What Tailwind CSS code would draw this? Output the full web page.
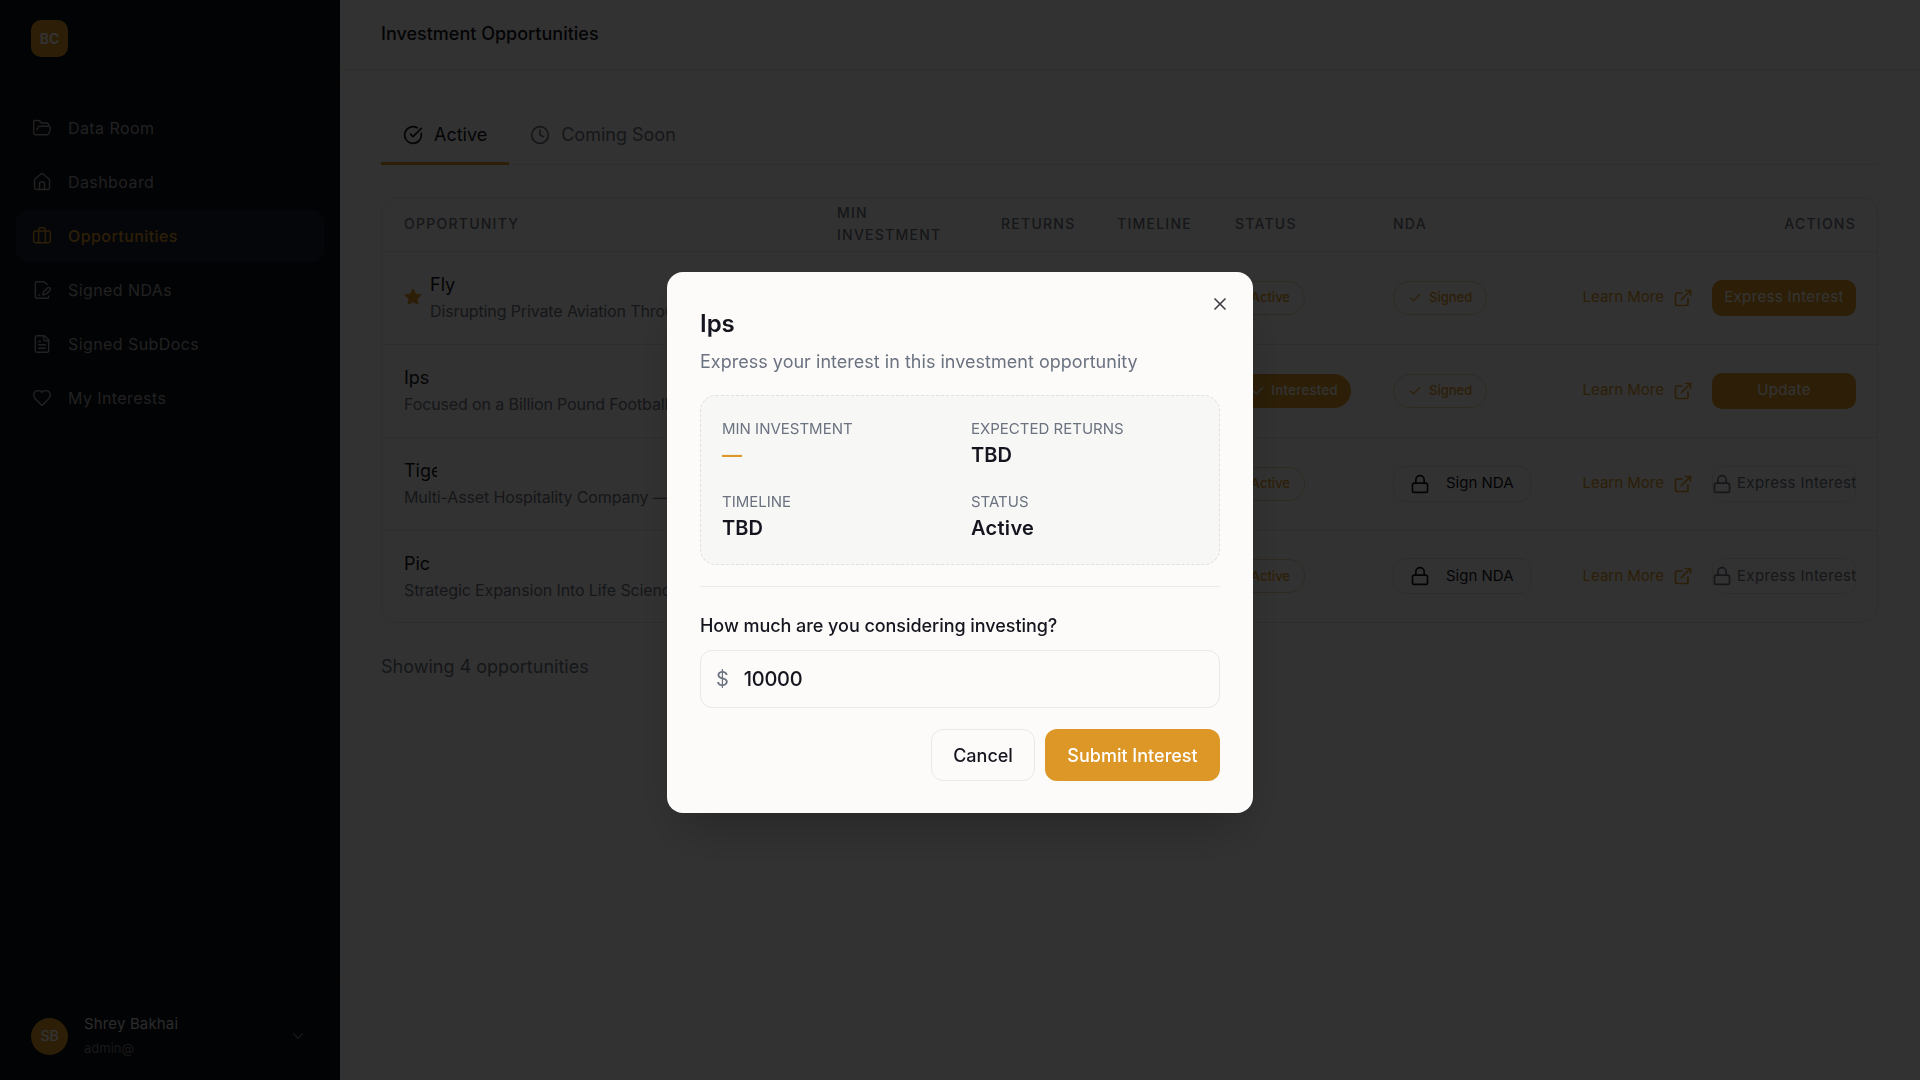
<!DOCTYPE html>
<html lang="en">
<head>
  <meta charset="UTF-8">
  <title>Investment Opportunities</title>
  <script src="https://cdn.jsdelivr.net/npm/@tailwindcss/browser@4"></script>
</head>
<body class="h-[1080px] overflow-hidden bg-[#fbfaf8] font-['Inter',sans-serif] text-[#15151f]">
  <div class="flex h-[1080px]">

    <!-- Sidebar -->
    <aside class="w-[340px] shrink-0 flex flex-col bg-[#0d0f14] text-[#a3a3a8]">
      <div class="h-[81px] shrink-0 flex items-center px-[31px] pb-[3px] border-b border-white/5">
        <div class="w-[37px] h-[37px] rounded-[10px] bg-[#dc9727] text-white text-sm font-semibold flex items-center justify-center">BC</div>
      </div>
      <nav class="flex flex-col gap-[2px] px-4 pt-[21px] text-[16px] tracking-[0.42px]">
        <a class="h-[52px] flex items-center gap-[16px] px-4 rounded-xl">
          <svg class="w-5 h-5" viewBox="0 0 24 24" fill="none" stroke="currentColor" stroke-width="1.75" stroke-linecap="round" stroke-linejoin="round"><path d="m6 14 1.5-2.9A2 2 0 0 1 9.24 10H20a2 2 0 0 1 1.94 2.5l-1.54 6a2 2 0 0 1-1.95 1.5H4a2 2 0 0 1-2-2V5a2 2 0 0 1 2-2h3.9a2 2 0 0 1 1.69.9l.81 1.2a2 2 0 0 0 1.67.9H18a2 2 0 0 1 2 2v2"/></svg>
          Data Room
        </a>
        <a class="h-[52px] flex items-center gap-[16px] px-4 rounded-xl">
          <svg class="w-5 h-5" viewBox="0 0 24 24" fill="none" stroke="currentColor" stroke-width="1.75" stroke-linecap="round" stroke-linejoin="round"><path d="M15 21v-8a1 1 0 0 0-1-1h-4a1 1 0 0 0-1 1v8"/><path d="M3 10a2 2 0 0 1 .709-1.528l7-5.999a2 2 0 0 1 2.582 0l7 5.999A2 2 0 0 1 21 10v9a2 2 0 0 1-2 2H5a2 2 0 0 1-2-2z"/></svg>
          Dashboard
        </a>
        <a class="h-[52px] flex items-center gap-[16px] px-4 rounded-xl bg-[#1c2230] text-[#dc9727] font-medium">
          <svg class="w-5 h-5" viewBox="0 0 24 24" fill="none" stroke="currentColor" stroke-width="1.75" stroke-linecap="round" stroke-linejoin="round"><path d="M16 20V4a2 2 0 0 0-2-2h-4a2 2 0 0 0-2 2v16"/><rect width="20" height="14" x="2" y="6" rx="2"/></svg>
          Opportunities
        </a>
        <a class="h-[52px] flex items-center gap-[16px] px-4 rounded-xl">
          <svg class="w-5 h-5" viewBox="0 0 24 24" fill="none" stroke="currentColor" stroke-width="1.75" stroke-linecap="round" stroke-linejoin="round"><path d="M20 19.5v.5a2 2 0 0 1-2 2H6a2 2 0 0 1-2-2V4a2 2 0 0 1 2-2h8.5L18 5.5"/><path d="M8 18h1"/><path d="M18.42 9.61a2.1 2.1 0 1 1 2.97 2.97L16.95 17 13 18l.99-3.95 4.43-4.44Z"/></svg>
          Signed NDAs
        </a>
        <a class="h-[52px] flex items-center gap-[16px] px-4 rounded-xl">
          <svg class="w-5 h-5" viewBox="0 0 24 24" fill="none" stroke="currentColor" stroke-width="1.75" stroke-linecap="round" stroke-linejoin="round"><path d="M15 2H6a2 2 0 0 0-2 2v16a2 2 0 0 0 2 2h12a2 2 0 0 0 2-2V7Z"/><path d="M14 2v4a2 2 0 0 0 2 2h4"/><path d="M10 9H8"/><path d="M16 13H8"/><path d="M16 17H8"/></svg>
          Signed SubDocs
        </a>
        <a class="h-[52px] flex items-center gap-[16px] px-4 rounded-xl">
          <svg class="w-5 h-5" viewBox="0 0 24 24" fill="none" stroke="currentColor" stroke-width="1.75" stroke-linecap="round" stroke-linejoin="round"><path d="M19 14c1.49-1.46 3-3.21 3-5.5A5.5 5.5 0 0 0 16.5 3c-1.76 0-3 .5-4.5 2-1.5-1.5-2.74-2-4.5-2A5.5 5.5 0 0 0 2 8.5c0 2.3 1.5 4.05 3 5.5l7 7Z"/></svg>
          My Interests
        </a>
      </nav>
      <div class="mt-auto h-[97px] pt-[8px] border-t border-white/5 flex items-center pl-[31px] pr-[33px] gap-4">
        <div class="w-[37px] h-[37px] rounded-full bg-[#dc9727] text-white text-sm font-medium flex items-center justify-center">SB</div>
        <div class="flex-1">
          <div class="text-[15px] leading-5 text-[#d6d6d8] tracking-[0.15px]">Shrey Bakhai</div>
          <div class="text-[13px] leading-5 mt-[4px] text-[#77777d]">admin@</div>
        </div>
        <svg class="w-[18px] h-[18px] text-[#77777d]" viewBox="0 0 24 24" fill="none" stroke="currentColor" stroke-width="1.75" stroke-linecap="round" stroke-linejoin="round"><path d="m6 9 6 6 6-6"/></svg>
      </div>
    </aside>

    <!-- Main -->
    <main class="flex-1 min-w-0">
      <header class="h-[70px] pb-[2px] border-b border-[#e3e3e1] flex items-center px-[41px]">
        <h1 class="text-[18px] font-medium">Investment Opportunities</h1>
      </header>

      <div class="pl-[41px] pr-[42px] pt-[35px]">
        <!-- Tabs -->
        <div class="flex h-[60px] border-b border-[#e3e3e1] text-[18px]">
          <div class="flex items-center gap-[11px] px-[22px] pt-[2px] border-b-[3px] border-[#dc9727] h-[60px]">
            <svg class="w-5 h-5" viewBox="0 0 24 24" fill="none" stroke="currentColor" stroke-width="2" stroke-linecap="round" stroke-linejoin="round"><path d="M21.801 10A10 10 0 1 1 17 3.335"/><path d="m9 11 3 3L22 4"/></svg>
            Active
          </div>
          <div class="flex items-center gap-[11px] px-[21px] text-[#6b7280]">
            <svg class="w-5 h-5" viewBox="0 0 24 24" fill="none" stroke="currentColor" stroke-width="2" stroke-linecap="round" stroke-linejoin="round"><circle cx="12" cy="12" r="10"/><polyline points="12 6 12 12 16 14"/></svg>
            Coming Soon
          </div>
        </div>

        <!-- Table -->
        <div class="mt-8 border border-[#e3e3e1] rounded-2xl overflow-hidden">
          <table class="w-full table-fixed">
            <colgroup>
              <col class="w-[433px]"><col class="w-[165px]"><col class="w-[116px]"><col class="w-[117px]"><col class="w-[158px]"><col>
            </colgroup>
            <thead>
              <tr class="h-[53px] text-left text-[14px] uppercase tracking-[1.25px] leading-[22px] text-[#6b7280]">
                <th class="pl-[22px] font-medium">Opportunity</th>
                <th class="pl-[22px] font-medium">Min<br>Investment</th>
                <th class="pl-[21px] font-medium">Returns</th>
                <th class="pl-[21px] font-medium">Timeline</th>
                <th class="pl-[22px] font-medium">Status</th>
                <th class="font-medium pl-[22px]">
                  <div class="flex justify-between pr-[21px]"><span>NDA</span><span>Actions</span></div>
                </th>
              </tr>
            </thead>
            <tbody>
              <tr class="h-[93px] border-t border-[#e3e3e1]">
                <td class="pl-[22px] pb-[1px]" colspan="4">
                  <div class="flex items-center gap-[8px]">
                    <svg class="w-[18px] h-[18px] text-[#dc9727]" viewBox="0 0 24 24" fill="currentColor" stroke="currentColor" stroke-width="2" stroke-linejoin="round"><polygon points="12 2 15.09 8.26 22 9.27 17 14.14 18.18 21.02 12 17.77 5.82 21.02 7 14.14 2 9.27 8.91 8.26 12 2"/></svg>
                    <div>
                      <div class="text-[18px] leading-7">Fly</div>
                      <div class="text-[16px] leading-6 tracking-[-0.12px] text-[#6b7280] whitespace-nowrap">Disrupting Private Aviation Through</div>
                    </div>
                  </div>
                </td>
                <td class="pl-[22px]"><span class="inline-flex items-center justify-end w-[70px] h-[34px] pr-[14px] rounded-full border border-[#e8d5b0] text-[#dc9727] text-[13px] font-medium">Active</span></td>
                <td class="pl-[22px]">
                  <div class="flex items-center pr-[21px]">
                    <span class="inline-flex items-center gap-[7px] h-[34px] px-[14px] rounded-full border border-[#e8d5b0] text-[#dc9727] text-[13px] font-medium">
                      <svg class="w-[14px] h-[14px]" viewBox="0 0 24 24" fill="none" stroke="currentColor" stroke-width="2" stroke-linecap="round" stroke-linejoin="round"><path d="M20 6 9 17l-5-5"/></svg>
                      Signed
                    </span>
                    <a class="ml-auto flex items-center gap-[9px] text-[#dc9727] text-[15px]">Learn More
                      <svg class="w-5 h-5" viewBox="0 0 24 24" fill="none" stroke="currentColor" stroke-width="2" stroke-linecap="round" stroke-linejoin="round"><path d="M15 3h6v6"/><path d="M10 14 21 3"/><path d="M18 13v6a2 2 0 0 1-2 2H5a2 2 0 0 1-2-2V8a2 2 0 0 1 2-2h6"/></svg>
                    </a>
                    <button class="ml-[19px] w-[144px] h-[36px] rounded-[10px] bg-[#dc9727] text-white text-[15px] tracking-[0.35px]">Express Interest</button>
                  </div>
                </td>
              </tr>
              <tr class="h-[93px] border-t border-[#e3e3e1]">
                <td class="pl-[22px] pb-[1px]" colspan="4">
                  <div class="w-[28px] overflow-hidden text-[18px] leading-7">Ips</div>
                  <div class="text-[16px] leading-6 tracking-[-0.12px] text-[#6b7280] whitespace-nowrap">Focused on a Billion Pound Football Club</div>
                </td>
                <td class="pl-[22px]"><span class="inline-flex items-center justify-end gap-[6px] w-[116px] h-[34px] pr-[13px] rounded-full bg-[#dc9727] text-white text-[13px] font-medium tracking-[0.4px]">
                  <svg class="w-[14px] h-[14px]" viewBox="0 0 24 24" fill="none" stroke="currentColor" stroke-width="2" stroke-linecap="round" stroke-linejoin="round"><path d="M20 6 9 17l-5-5"/></svg>
                  Interested
                </span></td>
                <td class="pl-[22px]">
                  <div class="flex items-center pr-[21px]">
                    <span class="inline-flex items-center gap-[7px] h-[34px] px-[14px] rounded-full border border-[#e8d5b0] text-[#dc9727] text-[13px] font-medium">
                      <svg class="w-[14px] h-[14px]" viewBox="0 0 24 24" fill="none" stroke="currentColor" stroke-width="2" stroke-linecap="round" stroke-linejoin="round"><path d="M20 6 9 17l-5-5"/></svg>
                      Signed
                    </span>
                    <a class="ml-auto flex items-center gap-[9px] text-[#dc9727] text-[15px]">Learn More
                      <svg class="w-5 h-5" viewBox="0 0 24 24" fill="none" stroke="currentColor" stroke-width="2" stroke-linecap="round" stroke-linejoin="round"><path d="M15 3h6v6"/><path d="M10 14 21 3"/><path d="M18 13v6a2 2 0 0 1-2 2H5a2 2 0 0 1-2-2V8a2 2 0 0 1 2-2h6"/></svg>
                    </a>
                    <button class="ml-[19px] w-[144px] h-[36px] rounded-[10px] bg-[#dc9727] text-white text-[15px] tracking-[0.35px]">Update</button>
                  </div>
                </td>
              </tr>
              <tr class="h-[93px] border-t border-[#e3e3e1]">
                <td class="pl-[22px] pb-[1px]" colspan="4">
                  <div class="w-[33px] overflow-hidden text-[18px] leading-7">Tige</div>
                  <div class="text-[16px] leading-6 tracking-[-0.12px] text-[#6b7280] whitespace-nowrap">Multi-Asset Hospitality Company — A</div>
                </td>
                <td class="pl-[22px]"><span class="inline-flex items-center justify-end w-[70px] h-[34px] pr-[14px] rounded-full border border-[#e8d5b0] text-[#dc9727] text-[13px] font-medium">Active</span></td>
                <td class="pl-[22px]">
                  <div class="flex items-center pr-[21px]">
                    <span class="inline-flex items-center gap-4 h-[36px] pl-[16px] pr-[16px] rounded-xl border border-[#dededc] text-[15px]">
                      <svg class="w-5 h-5" viewBox="0 0 24 24" fill="none" stroke="currentColor" stroke-width="2" stroke-linecap="round" stroke-linejoin="round"><rect width="18" height="11" x="3" y="11" rx="2"/><path d="M7 11V7a5 5 0 0 1 10 0v4"/></svg>
                      Sign NDA
                    </span>
                    <a class="ml-auto flex items-center gap-[9px] text-[#dc9727] text-[15px]">Learn More
                      <svg class="w-5 h-5" viewBox="0 0 24 24" fill="none" stroke="currentColor" stroke-width="2" stroke-linecap="round" stroke-linejoin="round"><path d="M15 3h6v6"/><path d="M10 14 21 3"/><path d="M18 13v6a2 2 0 0 1-2 2H5a2 2 0 0 1-2-2V8a2 2 0 0 1 2-2h6"/></svg>
                    </a>
                    <span class="ml-[19px] w-[144px] h-[36px] rounded-[10px] border border-[#e3e3e1] flex items-center gap-[5px] text-[#6b7280] text-[15px] tracking-[0.35px] whitespace-nowrap">
                      <svg class="w-5 h-5 shrink-0 -ml-px" viewBox="0 0 24 24" fill="none" stroke="currentColor" stroke-width="2" stroke-linecap="round" stroke-linejoin="round"><rect width="18" height="11" x="3" y="11" rx="2"/><path d="M7 11V7a5 5 0 0 1 10 0v4"/></svg>
                      Express Interest
                    </span>
                  </div>
                </td>
              </tr>
              <tr class="h-[92px] border-t border-[#e3e3e1]">
                <td class="pl-[22px] pb-[1px]" colspan="4">
                  <div class="w-[28px] overflow-hidden text-[18px] leading-7">Pic</div>
                  <div class="text-[16px] leading-6 tracking-[-0.12px] text-[#6b7280] whitespace-nowrap">Strategic Expansion Into Life Sciences</div>
                </td>
                <td class="pl-[22px]"><span class="inline-flex items-center justify-end w-[70px] h-[34px] pr-[14px] rounded-full border border-[#e8d5b0] text-[#dc9727] text-[13px] font-medium">Active</span></td>
                <td class="pl-[22px]">
                  <div class="flex items-center pr-[21px]">
                    <span class="inline-flex items-center gap-4 h-[36px] pl-[16px] pr-[16px] rounded-xl border border-[#dededc] text-[15px]">
                      <svg class="w-5 h-5" viewBox="0 0 24 24" fill="none" stroke="currentColor" stroke-width="2" stroke-linecap="round" stroke-linejoin="round"><rect width="18" height="11" x="3" y="11" rx="2"/><path d="M7 11V7a5 5 0 0 1 10 0v4"/></svg>
                      Sign NDA
                    </span>
                    <a class="ml-auto flex items-center gap-[9px] text-[#dc9727] text-[15px]">Learn More
                      <svg class="w-5 h-5" viewBox="0 0 24 24" fill="none" stroke="currentColor" stroke-width="2" stroke-linecap="round" stroke-linejoin="round"><path d="M15 3h6v6"/><path d="M10 14 21 3"/><path d="M18 13v6a2 2 0 0 1-2 2H5a2 2 0 0 1-2-2V8a2 2 0 0 1 2-2h6"/></svg>
                    </a>
                    <span class="ml-[19px] w-[144px] h-[36px] rounded-[10px] border border-[#e3e3e1] flex items-center gap-[5px] text-[#6b7280] text-[15px] tracking-[0.35px] whitespace-nowrap">
                      <svg class="w-5 h-5 shrink-0 -ml-px" viewBox="0 0 24 24" fill="none" stroke="currentColor" stroke-width="2" stroke-linecap="round" stroke-linejoin="round"><rect width="18" height="11" x="3" y="11" rx="2"/><path d="M7 11V7a5 5 0 0 1 10 0v4"/></svg>
                      Express Interest
                    </span>
                  </div>
                </td>
              </tr>
            </tbody>
          </table>
        </div>

        <p class="mt-[30px] text-[18px] text-[#6b7280]">Showing 4 opportunities</p>
      </div>
    </main>
  </div>

  <!-- Modal -->
  <div class="fixed inset-0 bg-black/80 backdrop-blur-[0.75px] flex items-center justify-center pt-[5px]">
    <div class="relative w-[586px] h-[541px] rounded-2xl bg-[#fcfbf9] px-[33px] pt-[33px] shadow-2xl">
      <button class="absolute right-[23px] top-[22px] text-[#3f3f46]">
        <svg class="w-5 h-5" viewBox="0 0 24 24" fill="none" stroke="currentColor" stroke-width="2" stroke-linecap="round" stroke-linejoin="round"><path d="M18 6 6 18"/><path d="m6 6 12 12"/></svg>
      </button>
      <h2 class="text-[24px] leading-9 font-semibold pt-[1px]">Ips</h2>
      <p class="mt-[6px] text-[18px] leading-7 text-[#6b7280] tracking-[0.02px]">Express your interest in this investment opportunity</p>
      <div class="mt-[19px] h-[170px] rounded-2xl border border-dashed border-[#e0e0de] bg-[#f7f7f5] px-[21px] pt-[22px] grid grid-cols-[249px_1fr] auto-rows-[73px]">
        <div>
          <div class="text-[15px] leading-[22px] uppercase text-[#6b7280]">Min Investment</div>
          <div class="text-[20px] leading-7 mt-[1px] font-semibold text-[#dc9727]">—</div>
        </div>
        <div>
          <div class="text-[15px] leading-[22px] uppercase text-[#6b7280]">Expected Returns</div>
          <div class="text-[20px] leading-7 mt-[1px] font-semibold tracking-[0.1px]">TBD</div>
        </div>
        <div>
          <div class="text-[15px] leading-[22px] uppercase text-[#6b7280]">Timeline</div>
          <div class="text-[20px] leading-7 mt-[1px] font-semibold tracking-[0.1px]">TBD</div>
        </div>
        <div>
          <div class="text-[15px] leading-[22px] uppercase text-[#6b7280]">Status</div>
          <div class="text-[20px] leading-7 mt-[1px] font-semibold tracking-[0.3px]">Active</div>
        </div>
      </div>
      <div class="mt-[21px] border-t border-[#eaeae8]"></div>
      <label class="block mt-[25px] text-[18px] leading-7 font-medium tracking-[-0.05px]">How much are you considering investing?</label>
      <div class="mt-[10px] h-[58px] rounded-xl border border-[#e8e8e6] flex items-center pl-[15px] gap-[15px] text-[20px]">
        <span class="text-[#6b7280]">$</span>
        <span class="font-medium tracking-[-0.3px]">10000</span>
      </div>
      <div class="mt-[21px] flex justify-end gap-[10px] text-[18px]">
        <button class="w-[104px] h-[52px] rounded-xl border border-[#e8e8e6] font-medium">Cancel</button>
        <button class="w-[175px] h-[52px] rounded-xl bg-[#dc9727] text-white font-medium">Submit Interest</button>
      </div>
    </div>
  </div>
</body>
</html>
